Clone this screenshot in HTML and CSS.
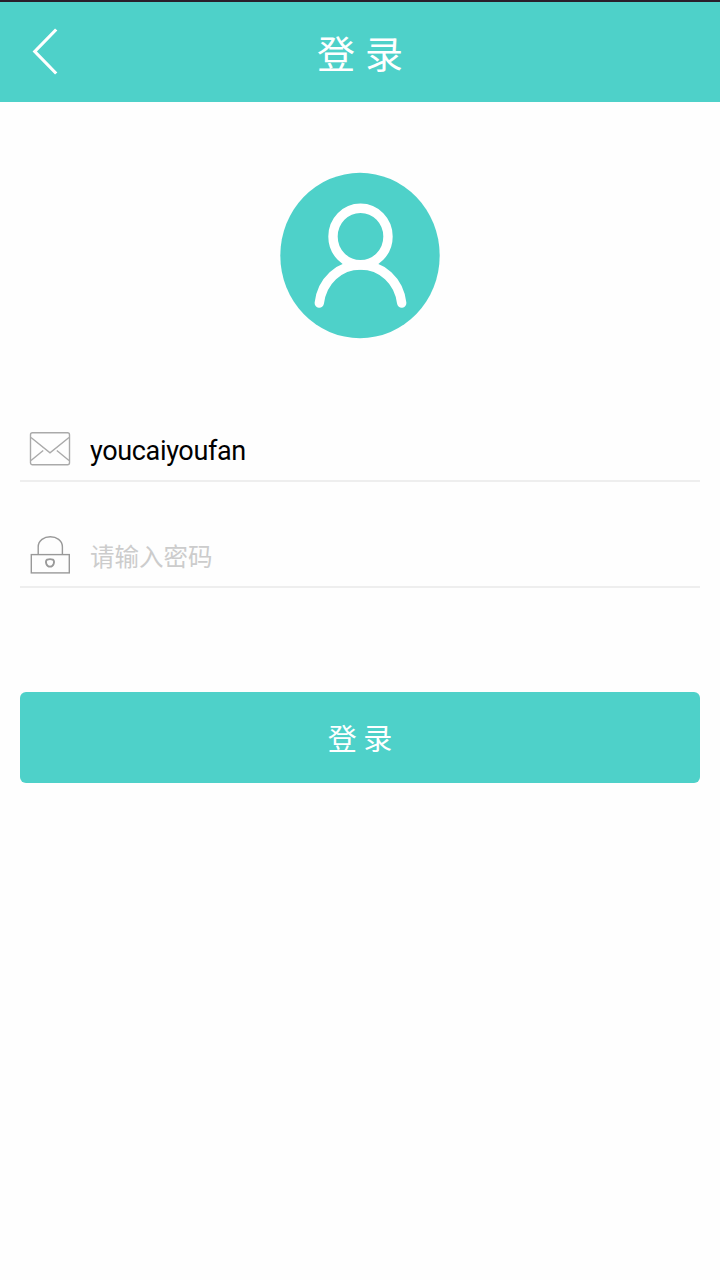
FILE: index.html
```
<!DOCTYPE html>
<html lang="zh-CN">

<head>
    <meta charset="UTF-8">
    <meta name="viewport" content="width=device-width, initial-scale=1.0">
    <title>登录</title>
    <link rel="stylesheet" href="styles.css">
</head>

<body>
    <header class="header">
        <a class="back" href="#" aria-label="返回">
            <svg width="30" height="50" viewBox="0 0 30 50">
                <path d="M27.2 2.5 L5.8 24.5 L27.2 46.5" fill="none" stroke="#fff" stroke-width="3.2" />
            </svg>
        </a>
        <h1 class="title">登 录</h1>
    </header>

    <form class="login">
        <div class="avatar">
            <svg width="160" height="167" viewBox="0 0 160 167">
                <ellipse cx="80" cy="83.5" rx="79.7" ry="82.7" fill="#4ed1c9" />
                <g fill="none" stroke="#fff" stroke-width="9.4" stroke-linecap="round">
                    <ellipse cx="80.5" cy="64.5" rx="27.5" ry="28.3" />
                    <path d="M39.3 131 C42 109 59 93 80.5 93 C102 93 119 109 121.7 131" />
                </g>
            </svg>
        </div>

        <div class="field">
            <svg class="icon" width="42" height="40" viewBox="0 0 42 40">
                <g fill="none" stroke="#aaa" stroke-width="1.4">
                    <rect x="1.5" y="2.8" width="39" height="32" rx="2" />
                    <path d="M2 7.5 L21 22.8 L40 7.5 M2 30.5 L14.2 20.5 M40 30.5 L27.8 20.5" />
                </g>
            </svg>
            <input class="input" type="text" value="youcaiyoufan">
        </div>

        <div class="field">
            <svg class="icon" width="42" height="40" viewBox="0 0 42 40">
                <g fill="none" stroke="#999" stroke-width="1.4">
                    <rect x="2.3" y="18.6" width="38" height="18.3" />
                    <path d="M9.2 18.6 V11 C9.2 -2.6 33.4 -2.6 33.4 11 V18.6" />
                    <path d="M18.2 23.6 C15.6 25.5 17.5 30.6 21 30.6 C24.5 30.6 26.4 25.5 23.8 23.6 Q21 22.8 18.2 23.6 Z" stroke-width="1.8" />
                </g>
            </svg>
            <input class="input" type="password" placeholder="请输入密码">
        </div>

        <button class="submit" type="button">登 录</button>
    </form>
</body>

</html>
```
FILE: styles.css
```
* {
    box-sizing: border-box;
}

body {
    margin: 0;
    min-height: 1280px;
    background-color: #fefefe;
    font-family: Roboto, "Noto Sans CJK SC", sans-serif;
}

.header {
    display: grid;
    grid-template-columns: 90px 1fr 90px;
    align-items: center;
    height: 102px;
    border-top: 2px solid #2a1f2b;
    background-color: #4ed1c9;
}

.back {
    display: flex;
    padding-left: 29px;
}

.title {
    margin: 0;
    color: #fff;
    font-family: "Noto Sans CJK SC", sans-serif;
    font-size: 38px;
    font-weight: 400;
    line-height: 56px;
    word-spacing: 1.5px;
    text-align: center;
}

.login {
    padding: 70px 20px 0;
}

.avatar {
    display: flex;
    justify-content: center;
    margin-bottom: 81px;
}

.field {
    display: flex;
    align-items: center;
    gap: 19px;
    height: 62px;
    margin-bottom: 44px;
    padding: 0 9px;
    border-bottom: 2px solid #eee;
}

.icon {
    flex: none;
}

.input {
    flex: 1;
    height: 60px;
    padding: 2px 0 0;
    border: none;
    outline: none;
    background: none;
    color: #000;
    font-family: Roboto, "Noto Sans CJK SC", sans-serif;
    font-size: 27px;
    letter-spacing: -0.35px;
}

.input::placeholder {
    color: #ccc;
    font-family: "Noto Sans CJK SC", sans-serif;
    font-size: 24.5px;
    letter-spacing: 0;
}

.submit {
    display: block;
    width: 100%;
    height: 91px;
    margin-top: 104px;
    padding: 0 0 1px;
    border: none;
    border-radius: 6px;
    background-color: #4ed1c9;
    color: #fff;
    font-family: "Noto Sans CJK SC", sans-serif;
    font-size: 29px;
    font-weight: 400;
}
```
